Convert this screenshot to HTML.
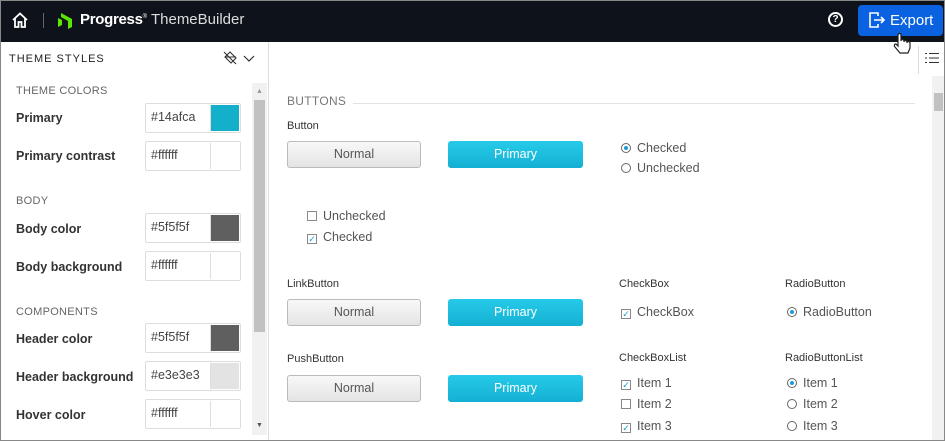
<!DOCTYPE html><html><head><style>
*{box-sizing:border-box;margin:0;padding:0}
body{width:945px;height:441px;overflow:hidden;font-family:"Liberation Sans",sans-serif;background:#fff;position:relative}
.a{position:absolute}
.hdr{left:0;top:0;width:945px;height:42px;background:#0e131b}
.lbl{font-size:12.5px;font-weight:bold;color:#333}
.sec{font-size:11px;color:#666;letter-spacing:.3px}
.inp{width:96px;height:30px;border:1px solid #ddd;border-radius:2px;font-size:12.5px;color:#444;padding:6px 0 0 5px}
.sw{position:absolute;right:1px;top:1px;width:29px;height:26px;border-left:1px solid #ddd}
.btn{width:134px;height:27px;border:1px solid #bbb;border-radius:3px;background:linear-gradient(#f8f8f8,#e4e4e4);font-size:12.5px;color:#555;text-align:center;line-height:25px}
.pb{width:135px;height:27px;border-radius:3px;background:linear-gradient(#26cbe8,#14b0d3);font-size:12.5px;color:#fff;text-align:center;line-height:27px}
.t{font-size:12.5px;color:#555}
.sm{font-size:11px;color:#333}
.cb{display:inline-block;width:10px;height:10px;border:1px solid #888;vertical-align:-1px;margin-right:6px;font-size:9px;line-height:8px;color:#1a9bd7;text-align:center}
.rb{display:inline-block;width:10px;height:10px;border:1px solid #666;border-radius:50%;vertical-align:-1px;margin-right:6px;position:relative}
.rb.on::after{content:"";position:absolute;left:2px;top:2px;width:4px;height:4px;border-radius:50%;background:#1a9bd7}
</style></head><body>
<div class="a hdr"></div>
<svg class="a" style="left:11px;top:11px" width="18" height="18" viewBox="0 0 18 18"><path d="M2 9L9 2.5 16 9M4 7.5V16h3.5v-5h3v5H14V7.5" fill="none" stroke="#fff" stroke-width="1.8"/></svg>
<div class="a" style="left:43px;top:13px;width:1px;height:15px;background:#666"></div>
<svg class="a" style="left:58px;top:12px" width="17" height="17" viewBox="0 0 17 17"><path d="M3 1l11 6v8l-4 2V9L3 5zM0 6l4 2v5L0 15z" fill="#5ce500"/></svg>
<div class="a" style="left:80px;top:11px;font-size:15px;color:#fff"><b style="letter-spacing:-.3px">Progress</b><sup style="font-size:6px">®</sup> <span style="color:#ddd">ThemeBuilder</span></div>
<div class="a" style="left:828px;top:12px;width:15px;height:15px;border:2px solid #fff;border-radius:50%;color:#fff;font-size:10px;font-weight:bold;text-align:center;line-height:11px">?</div>
<div class="a" style="left:858px;top:5px;width:85px;height:31px;background:#0b62e0;border-radius:4px;color:#fff;font-size:15px;line-height:31px;padding-left:32px">Export</div>
<svg class="a" style="left:868px;top:12px" width="18" height="16" viewBox="0 0 18 16"><path d="M10 4V1H2v14h8v-3M6 8h10M13 5l3 3-3 3" fill="none" stroke="#fff" stroke-width="1.6"/></svg>
<svg class="a" style="left:893px;top:32px" width="20" height="26" viewBox="0 0 20 26"><path d="M5 3v11l-2-2c-2 0-2 2-1 3l5 6h8l2-5v-5c0-2-3-2-3 0v-1c0-2-3-2-3 0v-1c0-2-3-2-3 0V3c0-2-3-2-3 0z" fill="#fff" stroke="#222" stroke-width="1.2"/></svg>
<!-- sidebar -->
<div class="a" style="left:268px;top:42px;width:1px;height:399px;background:#ddd"></div>
<div class="a" style="left:9px;top:53px;font-size:11px;letter-spacing:1px;color:#222">THEME STYLES</div>
<svg class="a" style="left:222px;top:50px" width="34" height="16" viewBox="0 0 34 16"><path d="M3 7l5-5 6 6-5 5zM3 7h11M2 2l12 12" fill="none" stroke="#333" stroke-width="1.1"/><path d="M22 6l5 5 5-5" fill="none" stroke="#333" stroke-width="1.2"/></svg>
<div class="a" style="left:252px;top:83px;width:15px;height:352px;background:#f1f1f1"></div>
<div class="a" style="left:254px;top:100px;width:11px;height:232px;background:#c1c1c1"></div>
<div class="a" style="left:256px;top:88px;font-size:7px;color:#999">▲</div>
<div class="a" style="left:256px;top:422px;font-size:7px;color:#555">▼</div>
<div class="a sec" style="left:16px;top:85px">THEME COLORS</div>
<div class="a lbl" style="left:16px;top:111px">Primary</div>
<div class="a inp" style="left:145px;top:103px">#14afca<div class="sw" style="background:#14afca"></div></div>
<div class="a lbl" style="left:16px;top:149px">Primary contrast</div>
<div class="a inp" style="left:145px;top:141px">#ffffff<div class="sw"></div></div>
<div class="a sec" style="left:16px;top:195px">BODY</div>
<div class="a lbl" style="left:16px;top:222px">Body color</div>
<div class="a inp" style="left:145px;top:213px">#5f5f5f<div class="sw" style="background:#5f5f5f"></div></div>
<div class="a lbl" style="left:16px;top:260px">Body background</div>
<div class="a inp" style="left:145px;top:251px">#ffffff<div class="sw"></div></div>
<div class="a sec" style="left:16px;top:306px">COMPONENTS</div>
<div class="a lbl" style="left:16px;top:332px">Header color</div>
<div class="a inp" style="left:145px;top:323px">#5f5f5f<div class="sw" style="background:#5f5f5f"></div></div>
<div class="a lbl" style="left:16px;top:370px">Header background</div>
<div class="a inp" style="left:145px;top:361px">#e3e3e3<div class="sw" style="background:#e3e3e3"></div></div>
<div class="a lbl" style="left:16px;top:408px">Hover color</div>
<div class="a inp" style="left:145px;top:399px">#ffffff<div class="sw"></div></div>
<!-- right -->
<div class="a" style="left:918px;top:46px;width:1px;height:28px;background:#ddd"></div>
<svg class="a" style="left:925px;top:52px" width="14" height="12" viewBox="0 0 14 12"><path d="M4 1.5h10M4 6h10M4 10.5h10" stroke="#333" stroke-width="1.1"/><path d="M0 1h2v1H0zM0 5.5h2v1H0zM0 10h2v1H0z" fill="#333"/></svg>
<div class="a" style="left:932px;top:76px;width:12px;height:364px;background:#f1f1f1"></div>
<div class="a" style="left:934px;top:93px;width:9px;height:18px;background:#c1c1c1"></div>
<div class="a sec" style="left:287px;top:94px;font-size:12px;color:#777">BUTTONS</div>
<div class="a" style="left:353px;top:103px;width:562px;height:1px;background:#e3e3e3"></div>
<div class="a sm" style="left:287px;top:120px">Button</div>
<div class="a btn" style="left:287px;top:141px">Normal</div>
<div class="a pb" style="left:448px;top:141px">Primary</div>
<div class="a t" style="left:621px;top:141px"><span class="rb on"></span>Checked</div>
<div class="a t" style="left:621px;top:161px"><span class="rb"></span>Unchecked</div>
<div class="a t" style="left:307px;top:209px"><span class="cb"></span>Unchecked</div>
<div class="a t" style="left:307px;top:230px"><span class="cb">✓</span>Checked</div>
<div class="a sm" style="left:287px;top:278px">LinkButton</div>
<div class="a btn" style="left:287px;top:299px">Normal</div>
<div class="a pb" style="left:448px;top:299px">Primary</div>
<div class="a sm" style="left:619px;top:278px">CheckBox</div>
<div class="a t" style="left:621px;top:305px"><span class="cb">✓</span>CheckBox</div>
<div class="a sm" style="left:785px;top:278px">RadioButton</div>
<div class="a t" style="left:787px;top:305px"><span class="rb on"></span>RadioButton</div>
<div class="a sm" style="left:287px;top:353px">PushButton</div>
<div class="a btn" style="left:287px;top:375px">Normal</div>
<div class="a pb" style="left:448px;top:375px">Primary</div>
<div class="a sm" style="left:619px;top:352px">CheckBoxList</div>
<div class="a t" style="left:621px;top:376px"><span class="cb">✓</span>Item 1</div>
<div class="a t" style="left:621px;top:397px"><span class="cb"></span>Item 2</div>
<div class="a t" style="left:621px;top:419px"><span class="cb">✓</span>Item 3</div>
<div class="a sm" style="left:785px;top:352px">RadioButtonList</div>
<div class="a t" style="left:787px;top:376px"><span class="rb on"></span>Item 1</div>
<div class="a t" style="left:787px;top:397px"><span class="rb"></span>Item 2</div>
<div class="a t" style="left:787px;top:419px"><span class="rb"></span>Item 3</div>
<div class="a" style="left:0;top:0;width:945px;height:441px;border:1px solid #888;pointer-events:none"></div>
</body></html>
